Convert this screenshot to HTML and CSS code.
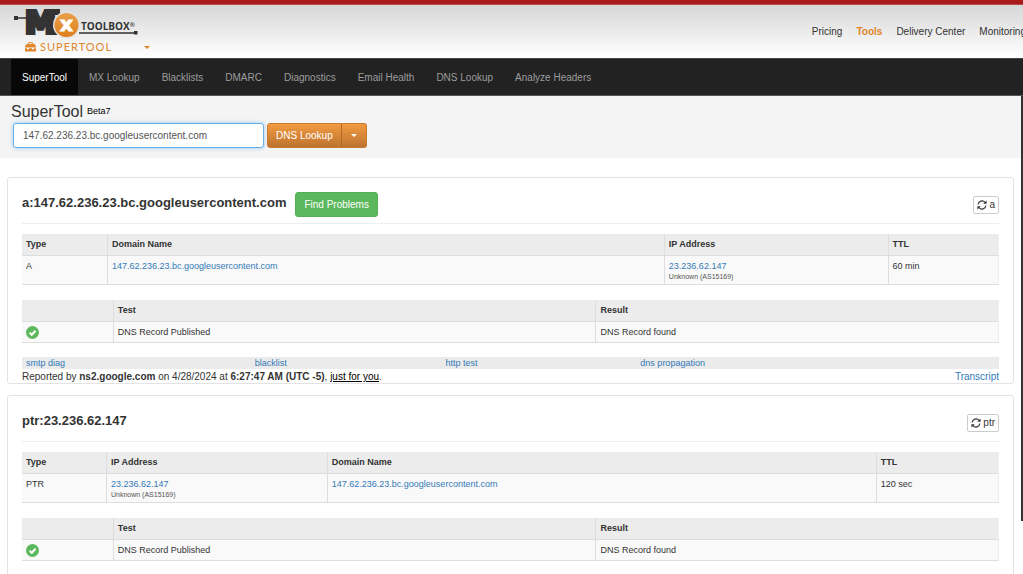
FILE: index.html
```html
<!DOCTYPE html>
<html lang="en">
<head>
<meta charset="utf-8">
<title>SuperTool</title>
<link rel="stylesheet" href="styles.css">
</head>
<body>
<svg class="defs" aria-hidden="true">
  <defs>
    <linearGradient id="disc" x1="0" y1="0" x2="0" y2="1">
      <stop offset="0" stop-color="#e9a04c"/><stop offset="1" stop-color="#e07f1b"/>
    </linearGradient>
    <symbol id="ok" viewBox="0 0 12 12">
      <circle cx="6" cy="6" r="6" fill="#5cb85c"/>
      <path d="M3.3 6.2l2 1.9 3.5-3.7" fill="none" stroke="#fff" stroke-width="1.8"/>
    </symbol>
    <symbol id="refresh" viewBox="0 0 12 12">
      <path d="M1.300 5.4A4.700 4.700 0 0 1 9.6 2.900M10.7 6.6A4.700 4.700 0 0 1 2.4 9.100" fill="none" stroke="#333" stroke-width="1.4"/>
      <path d="M11.500 .6v4H7.500zM.5 11.400v-4h4z" fill="#333"/>
    </symbol>
  </defs>
</svg>

<header class="top">
  <div class="brand">
    <a href="#" class="logo" aria-label="MxToolbox">
      <svg width="126" height="34" viewBox="0 0 126 34">
        <path d="M1 10h12M65 25h57" stroke="#333" stroke-width="1.3"/>
        <path d="M0 8h4v4H0zM120 23h3.500v3.500h-3.500z" fill="#333"/>
        <text x="11" y="25" class="logo-m">M</text>
        <path d="M37 1h9v6h-9zM37 22h8v5h-8z" fill="#333"/>
        <circle cx="52.500" cy="17" r="13.500" fill="#e4e4e4"/>
        <circle cx="52.500" cy="17" r="12" fill="url(#disc)"/>
        <text x="52.500" y="23" class="logo-x" text-anchor="middle">x</text>
        <text x="67" y="22" class="logo-word">TOOLBOX<tspan class="logo-reg" dy="-3">®</tspan></text>
      </svg>
    </a>
    <button class="product" type="button">
      <svg width="11" height="10" viewBox="0 0 11 10">
        <path d="M3 2.500V1.500Q3 .7 4 .7h3q1 0 1 .8v1" fill="none" stroke="#e0862c"/>
        <path d="M2.500 2h6Q11 2 11 5.500H0Q0 2 2.500 2zM0 6.300h2v1h2v-1h3v1h2v-1h2V9.500H0z" fill="#e0862c"/>
      </svg>
      <span>SUPERTOOL</span>
      <i class="caret caret-brand"></i>
    </button>
  </div>
  <nav class="site-nav">
    <a href="#">Pricing</a>
    <a href="#" class="current">Tools</a>
    <a href="#">Delivery Center</a>
    <a href="#">Monitoring</a>
  </nav>
</header>

<nav class="tool-nav">
  <a href="#" class="active">SuperTool</a>
  <a href="#">MX Lookup</a>
  <a href="#">Blacklists</a>
  <a href="#">DMARC</a>
  <a href="#">Diagnostics</a>
  <a href="#">Email Health</a>
  <a href="#">DNS Lookup</a>
  <a href="#">Analyze Headers</a>
</nav>

<div class="page">
<form class="search">
  <h1><label for="q">SuperTool</label> <small>Beta7</small></h1>
  <div class="search-row">
    <input id="q" type="text" value="147.62.236.23.bc.googleusercontent.com">
    <div class="split">
      <button type="button">DNS Lookup</button>
      <button type="button" class="drop" aria-label="More lookups"><i class="caret"></i></button>
    </div>
  </div>
</form>

<main class="results">
  <section class="card">
    <div class="card-head">
      <h2>a:147.62.236.23.bc.googleusercontent.com</h2>
      <button type="button" class="find">Find Problems</button>
      <button type="button" class="refresh"><svg width="10" height="10"><use href="#refresh"/></svg>a</button>
    </div>
    <table>
      <colgroup><col class="a-type"><col class="a-domain"><col class="a-ip"><col></colgroup>
      <thead><tr><th>Type</th><th>Domain Name</th><th>IP Address</th><th>TTL</th></tr></thead>
      <tbody><tr><td>A</td><td><a href="#">147.62.236.23.bc.googleusercontent.com</a></td><td><a href="#">23.236.62.147</a><span class="asn">Unknown (AS15169)</span></td><td>60 min</td></tr></tbody>
    </table>
    <table>
      <colgroup><col class="t-icon"><col class="t-test"><col></colgroup>
      <thead><tr><th></th><th>Test</th><th>Result</th></tr></thead>
      <tbody><tr><td><svg class="ok" width="13" height="13" role="img" aria-label="Passed"><use href="#ok"/></svg></td><td>DNS Record Published</td><td>DNS Record found</td></tr></tbody>
    </table>
    <div class="more">
      <a href="#">smtp diag</a>
      <a href="#">blacklist</a>
      <a href="#">http test</a>
      <a href="#">dns propagation</a>
    </div>
    <div class="report">
      <p>Reported by <b>ns2.google.com</b> on 4/28/2024 at <b>6:27:47 AM (UTC -5)</b>, <a href="#" class="just">just for you</a>.</p>
      <a href="#">Transcript</a>
    </div>
  </section>

  <section class="card">
    <div class="card-head">
      <h2>ptr:23.236.62.147</h2>
      <button type="button" class="refresh"><svg width="10" height="10"><use href="#refresh"/></svg>ptr</button>
    </div>
    <table>
      <colgroup><col class="p-type"><col class="p-ip"><col class="p-domain"><col></colgroup>
      <thead><tr><th>Type</th><th>IP Address</th><th>Domain Name</th><th>TTL</th></tr></thead>
      <tbody><tr><td>PTR</td><td><a href="#">23.236.62.147</a><span class="asn">Unknown (AS15169)</span></td><td><a href="#">147.62.236.23.bc.googleusercontent.com</a></td><td>120 sec</td></tr></tbody>
    </table>
    <table>
      <colgroup><col class="t-icon"><col class="t-test"><col></colgroup>
      <thead><tr><th></th><th>Test</th><th>Result</th></tr></thead>
      <tbody><tr><td><svg class="ok" width="13" height="13" role="img" aria-label="Passed"><use href="#ok"/></svg></td><td>DNS Record Published</td><td>DNS Record found</td></tr></tbody>
    </table>
  </section>
</main>
<div class="scroll-thumb"></div>
</div>
</body>
</html>
```
FILE: styles.css
```css
* { box-sizing: border-box; }
html { overflow: hidden; }
body {
  margin: 0;
  font: 10px/13px "Liberation Sans", Arial, sans-serif;
  color: #333;
  background: #fff;
}
button, input { font: inherit; color: inherit; margin: 0; }
button { cursor: pointer; }
a { color: #337ab7; text-decoration: none; }
h1, h2, p { margin: 0; }
.defs { position: absolute; width: 0; height: 0; }

/* Site header */
.top {
  display: flex;
  justify-content: space-between;
  align-items: center;
  height: 58px;
  padding-left: 14px;
  border-top: 4px solid #aa1a1a;
  background: linear-gradient(#d6d6d6, #fff);
  box-shadow: inset 0 1px #b94a4a;
  overflow: hidden;
}
.brand { display: flex; flex-direction: column; }
.logo { display: block; height: 32px; }
.logo svg { overflow: visible; }
.logo-m { font: bold 31px "DejaVu Sans", sans-serif; fill: #333; stroke: #333; stroke-width: 4px; }
.logo-x { font: bold 20px "DejaVu Sans", sans-serif; fill: #fff; stroke: #fff; stroke-width: 1px; }
.logo-word { font: bold 10px "Open Sans", sans-serif; fill: #333; }
.logo-reg { font-size: 6px; }
.product {
  display: flex;
  align-items: center;
  gap: 4px;
  padding: 0 0 0 11px;
  border: 0;
  background: none;
  color: #e0862c;
  font: 11px/14px Lato, sans-serif;
  letter-spacing: 1px;
}
.caret {
  display: block;
  border: 3px solid transparent;
  border-top-color: currentColor;
  border-bottom: 0;
}
.caret-brand { margin-left: 28px; }
.site-nav { display: flex; gap: 14px; margin-right: -3px; white-space: nowrap; }
.site-nav a { color: #333; }
.site-nav .current { color: #e0862c; font-weight: bold; }

/* Tool navigation */
.tool-nav {
  display: flex;
  height: 38px;
  padding-left: 11px;
  background: #222;
  border-top: 1px solid #444;
  border-bottom: 1px solid #555;
}
.tool-nav a { padding: 1px 11px 0; line-height: 35px; color: #9d9d9d; white-space: nowrap; }
.tool-nav .active { background: #080808; color: #fff; }

.page { position: relative; }
.scroll-thumb { position: absolute; top: 0; right: 0; width: 2px; height: 425px; background: #333; }

/* Search */
.search { height: 62px; padding: 6px 11px 0; background: #f4f4f4; }
h1 { display: flex; gap: 4px; font-size: 16px; line-height: 19px; font-weight: normal; }
h1 small { font-size: 9px; line-height: 18px; color: #000; }
.search-row { display: flex; gap: 3px; padding: 2px 2px 0; }
.search-row input {
  width: 251px;
  height: 25px;
  padding: 0 9px;
  border: 1px solid #66afe9;
  border-radius: 3px;
  background: #fff;
  color: #555;
  outline: 0;
  box-shadow: 0 0 4px #66afe999;
}
.split { display: flex; }
.split button {
  height: 25px;
  padding: 0 8px;
  border: 1px solid #c67a2e;
  border-radius: 3px 0 0 3px;
  background: linear-gradient(#f29a40, #bd7430);
  color: #fff;
}
.split .drop { padding: 0 9px; border-left-color: #b06a26; border-radius: 0 3px 3px 0; margin-left: -1px; }

/* Result cards */
.results { display: grid; gap: 11px; padding: 19px 9px 0 7px; }
.card {
  padding: 14px 14px 0;
  border: 1px solid #e3e3e3;
  border-radius: 3px;
}
.card:last-child { padding-bottom: 48px; }
.card-head {
  display: flex;
  align-items: center;
  gap: 9px;
  min-height: 32px;
  margin-bottom: 10px;
  padding-bottom: 6px;
  border-bottom: 1px solid #eee;
}
h2 { padding-bottom: 4px; font-size: 13px; line-height: 16px; }
.find { height: 25px; padding: 0 8px; border: 1px solid #55b055; border-radius: 3px; background: #5cb85c; color: #fff; }
.refresh {
  display: flex;
  align-items: center;
  gap: 2px;
  height: 18px;
  margin-left: auto;
  padding: 0 3px;
  border: 1px solid #ccc;
  border-radius: 2px;
  background: #fff;
}

table {
  width: 100%;
  margin-bottom: 15px;
  border-collapse: separate;
  border-spacing: 0;
  table-layout: fixed;
  font-size: 9px;
}
table + table { margin-bottom: 14px; }
th, td { border-right: 1px solid #ddd; border-bottom: 1px solid #ddd; text-align: left; vertical-align: top; }
th { height: 22px; padding: 4px 4px; background: #ececec; }
td { padding: 4px 4px 3px; background: #f9f9f9; }
th:last-child, td:last-child { border-right-color: #eee; }
.ok { display: block; }
.asn { display: block; font-size: 7px; line-height: 8px; color: #555; }
.a-type { width: 8.800%; }
.a-domain { width: 57%; }
.a-ip { width: 22.900%; }
.p-type { width: 8.700%; }
.p-ip { width: 22.600%; }
.p-domain { width: 56.200%; }
.t-icon { width: 9.400%; }
.t-test { width: 49.400%; }

.more {
  display: grid;
  grid-template-columns: 229fr 191fr 195fr 359fr;
  padding-left: 4px;
  background: #ebebeb;
  font-size: 9px;
  line-height: 12px;
}
.report { display: flex; justify-content: space-between; padding-top: 1px; }
.just { color: #000; text-decoration: underline; }
```
